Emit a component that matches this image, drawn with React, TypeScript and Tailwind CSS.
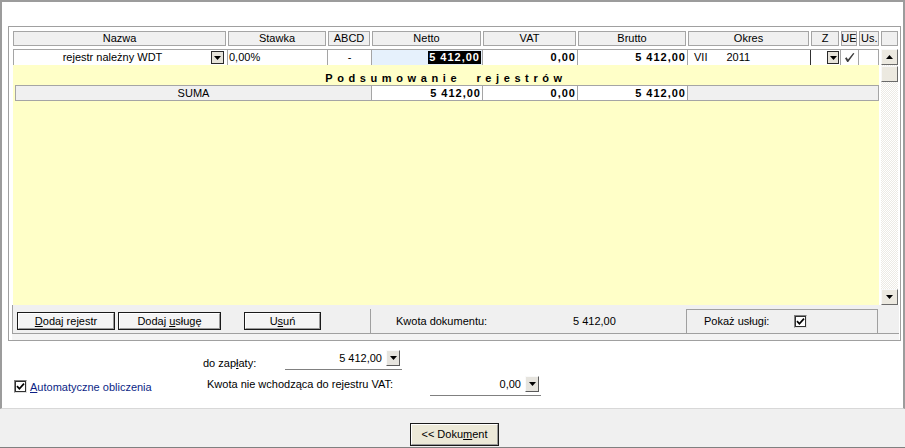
import React from "react";

function Tri() {
  return (
    <svg width="7" height="4" viewBox="0 0 7 4" className="block">
      <polygon points="0,0 7,0 3.5,4" fill="#000" />
    </svg>
  );
}

function TriUp() {
  return (
    <svg width="7" height="4" viewBox="0 0 7 4" className="block">
      <polygon points="0,4 7,4 3.5,0" fill="#000" />
    </svg>
  );
}

function Tick() {
  return (
    <svg width="9" height="9" viewBox="0 0 9 9" className="block">
      <path d="M1 4.2 L3.4 6.8 L8 1.6" stroke="#000" strokeWidth="1.7" fill="none" />
    </svg>
  );
}

function RowDrop({ className }: { className: string }) {
  return (
    <div className={`h-[13px] border border-[#2a2a2a] bg-[#e6e3da] flex items-center justify-center ${className}`}>
      <Tri />
    </div>
  );
}

function FieldDrop() {
  return (
    <div className="w-[14px] h-[16px] border border-t-[#fafafa] border-l-[#fafafa] border-r-[#5a5a5a] border-b-[#5a5a5a] bg-[#e6e4de] flex items-center justify-center">
      <Tri />
    </div>
  );
}

function WinBtn({ children, className }: { children: React.ReactNode; className: string }) {
  return (
    <div className={`border border-[#1a1a1a] ${className}`}>
      <div className="h-full w-full border border-t-white border-l-white border-r-[#9a9a9a] border-b-[#9a9a9a] flex items-center justify-center leading-none whitespace-nowrap">
        {children}
      </div>
    </div>
  );
}

function CheckBox() {
  return (
    <div className="w-[13px] h-[13px] border border-t-[#808080] border-l-[#808080] border-r-[#e0e0e0] border-b-[#e0e0e0] bg-white">
      <div className="w-full h-full border border-[#303030] flex items-center justify-center">
        <Tick />
      </div>
    </div>
  );
}

export default function App() {
  const hdr =
    "h-[15px] border border-[#a5a5a5] bg-[#f0f0f0] flex items-center justify-center leading-none overflow-hidden whitespace-nowrap";
  const cell = "h-full border-r border-[#a5a5a5] flex items-center leading-none whitespace-nowrap overflow-hidden";
  const num = "font-bold tracking-[1px]";

  return (
    <div className="w-[905px] h-[448px] flex flex-col bg-white text-[11px] text-black font-['Liberation_Sans',Arial,sans-serif] overflow-hidden">
      {/* top panel */}
      <div className="h-[409px] shrink-0 border-t-2 border-l-2 border-r-2 border-b border-t-[#9c9c9c] border-l-[#9c9c9c] border-r-[#9c9c9c] border-b-[#d8d8d8] pt-[24px] pl-[6px] flex flex-col">
        {/* frame */}
        <div className="w-[893px] h-[315px] shrink-0 border border-[#a0a0a0] bg-white flex flex-col pt-[4px] pl-[4px] pr-[1px]">
          {/* header */}
          <div className="flex gap-[2px] h-[15px] shrink-0">
            <div className={`${hdr} w-[213px]`}>Nazwa</div>
            <div className={`${hdr} w-[98px]`}>Stawka</div>
            <div className={`${hdr} w-[42px]`}>ABCD</div>
            <div className={`${hdr} w-[109px]`}>Netto</div>
            <div className={`${hdr} w-[93px]`}>VAT</div>
            <div className={`${hdr} w-[108px]`}>Brutto</div>
            <div className={`${hdr} w-[121px]`}>Okres</div>
            <div className={`${hdr} w-[28px]`}>Z</div>
            <div className={`${hdr} w-[16px]`}>UE</div>
            <div className={`${hdr} w-[20px] justify-start pl-[1px]`}>Us.</div>
            <div className={`${hdr} w-[17px]`}></div>
          </div>

          {/* body */}
          <div className="mt-[3px] flex gap-[2px] h-[256px] shrink-0">
            <div className="w-[866px] flex flex-col">
              {/* row 1 */}
              <div className="h-[16px] w-[866px] border-t border-l border-[#a5a5a5] bg-white flex shrink-0">
                <div className={`${cell} w-[214px]`}>
                  <div className="flex-1 text-center">rejestr należny WDT</div>
                  <RowDrop className="w-[13px] mr-[3px]" />
                </div>
                <div className={`${cell} w-[100px] pl-[1px]`}>0,00%</div>
                <div className={`${cell} w-[44px] justify-center`}>-</div>
                <div className={`${cell} w-[111px] justify-end pr-[1px] bg-[#e6f1fc]`}>
                  <span className={`${num} bg-black text-white px-[1px] leading-[13px]`}>5 412,00</span>
                </div>
                <div className={`${cell} w-[95px] justify-end pr-[1px]`}>
                  <span className={num}>0,00</span>
                </div>
                <div className={`${cell} w-[110px] justify-end pr-[1px]`}>
                  <span className={num}>5 412,00</span>
                </div>
                <div className={`${cell} w-[123px] pl-[6px] border-r-[#303030]`}>
                  <span>VII</span>
                  <span className="ml-[19px]">2011</span>
                </div>
                <div className={`${cell} w-[30px] justify-end`}>
                  <RowDrop className="w-[12px] mr-[1px]" />
                </div>
                <div className={`${cell} w-[18px] justify-center`}>
                  <svg width="11" height="11" viewBox="0 0 11 11" className="block">
                    <path
                      d="M1 6.2 L2.6 5.2 L4 7.4 L9.2 1 L10.4 1.6 L4.2 10 L3.2 10 Z"
                      fill="#3c3c3c"
                    />
                  </svg>
                </div>
                <div className={`${cell} w-[20px]`}></div>
              </div>

              {/* yellow area */}
              <div className="flex-1 bg-[#ffffc8] flex flex-col">
                <div className="h-[20px] pt-[7px] leading-[12px] text-center font-bold tracking-[4.6px] whitespace-pre">
                  {"Podsumowanie  rejestrów"}
                </div>
                <div className="ml-[2px] w-[864px] h-[16px] border border-[#a5a5a5] flex">
                  <div className={`${cell} w-[356px] justify-center bg-[#f0f0f0]`}>SUMA</div>
                  <div className={`${cell} w-[111px] justify-end pr-[1px] bg-white`}>
                    <span className={num}>5 412,00</span>
                  </div>
                  <div className={`${cell} w-[95px] justify-end pr-[1px] bg-white`}>
                    <span className={num}>0,00</span>
                  </div>
                  <div className={`${cell} w-[110px] justify-end pr-[1px] bg-white`}>
                    <span className={num}>5 412,00</span>
                  </div>
                  <div className="flex-1 bg-[#f0f0f0]"></div>
                </div>
              </div>
            </div>

            {/* scrollbar */}
            <div className="w-[17px] h-[256px] flex flex-col bg-[repeating-conic-gradient(#eceae4_0_25%,#ffffff_0_50%)] bg-[length:2px_2px]">
              <div className="h-[16px] border border-t-[#f8f8f8] border-l-[#f8f8f8] border-r-[#6a6a6a] border-b-[#6a6a6a] bg-[#ece9e0] flex items-center justify-center">
                <TriUp />
              </div>
              <div className="h-[16px] mt-[1px] border border-t-[#f8f8f8] border-l-[#f8f8f8] border-r-[#6a6a6a] border-b-[#6a6a6a] bg-[#ece9e0]"></div>
              <div className="flex-1"></div>
              <div className="h-[16px] border border-t-[#f8f8f8] border-l-[#f8f8f8] border-r-[#6a6a6a] border-b-[#6a6a6a] bg-[#ece9e0] flex items-center justify-center">
                <Tri />
              </div>
            </div>
          </div>

          {/* bottom bar */}
          <div className="-ml-[1px] h-[35px] flex flex-col bg-[#f4f4f4]">
            <div className="h-[29px] border-l border-b border-[#a0a0a0] bg-[#f0f0f0] flex items-start">
              <WinBtn className="ml-[4px] mt-[7px] w-[98px] h-[18px] bg-[#f4f4f4]">
                <span>
                  <span className="underline">D</span>odaj rejestr
                </span>
              </WinBtn>
              <WinBtn className="ml-[3px] mt-[7px] w-[103px] h-[18px] bg-[#f4f4f4]">
                <span>
                  Dodaj <span className="underline">u</span>sługę
                </span>
              </WinBtn>
              <WinBtn className="ml-[23px] mt-[7px] w-[77px] h-[18px] bg-[#f4f4f4]">
                <span>
                  U<span className="underline">s</span>uń
                </span>
              </WinBtn>
              <div className="ml-[49px] mt-[4px] w-px h-[25px] bg-[#a0a0a0]"></div>
              <div className="w-[202px] pl-[25px] mt-[10px] leading-[13px]">Kwota dokumentu:</div>
              <div className="w-[113px] mt-[10px] leading-[13px]">5 412,00</div>
              <div className="mt-[4px] w-[192px] h-[25px] border border-[#a0a0a0] flex items-center">
                <div className="w-[107px] pl-[17px] leading-none">Pokaż usługi:</div>
                <CheckBox />
              </div>
            </div>
          </div>
        </div>

        {/* lower fields */}
        <div className="mt-[8px] flex h-[21px] shrink-0">
          <div className="w-[277px] pl-[195px] pt-[8px] leading-[12px]">
            do zap<span className="underline">ł</span>aty:
          </div>
          <div className="w-[117px] h-[21px] border-b border-[#808080] flex items-start">
            <div className="w-[100px] text-right pr-[3px] pt-[3px] leading-[12px]">5 412,00</div>
            <div className="ml-[1px] mt-[1px]">
              <FieldDrop />
            </div>
          </div>
        </div>
        <div className="mt-[6px] flex h-[20px] shrink-0">
          <div className="w-[199px] flex items-start">
            <div className="ml-[6px] mt-[4px]">
              <CheckBox />
            </div>
            <div className="ml-[3px] pt-[5px] leading-[12px] text-[#0c1f86] whitespace-nowrap">
              <span className="underline">A</span>utomatyczne obliczenia
            </div>
          </div>
          <div className="w-[223px] pt-[2px] leading-[12px] whitespace-nowrap">Kwota nie wchodząca do rejestru VAT:</div>
          <div className="w-[111px] h-[20px] border-b border-[#808080] flex items-start">
            <div className="w-[95px] text-right pr-[4px] pt-[2px] leading-[12px]">0,00</div>
            <FieldDrop />
          </div>
        </div>
      </div>

      {/* bottom section */}
      <div className="h-[39px] shrink-0 bg-[#f0f0f0] border-b border-[#808080] pl-[410px] pt-[14px]">
        <WinBtn className="w-[89px] h-[23px] bg-[#ece9d8]">
          <span>
            &lt;&lt; Doku<span className="underline">m</span>ent
          </span>
        </WinBtn>
      </div>
    </div>
  );
}
